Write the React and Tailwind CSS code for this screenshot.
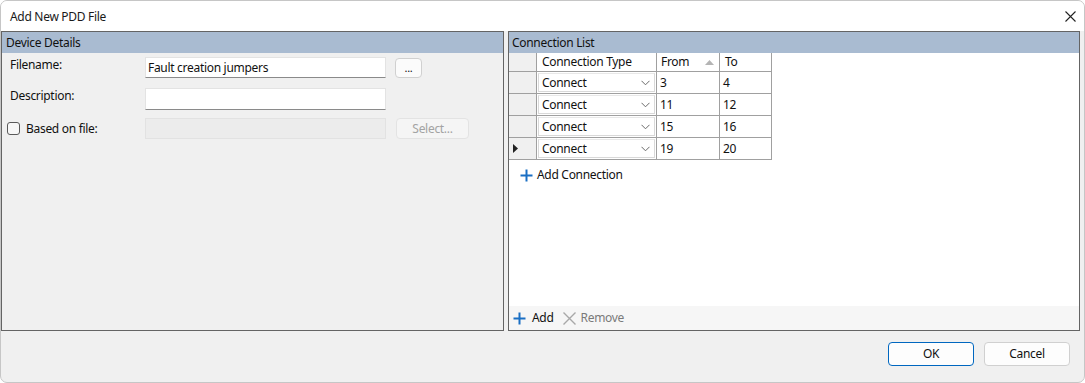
import React from "react";

const rows = [
  { from: "3", to: "4" },
  { from: "11", to: "12" },
  { from: "15", to: "16" },
  { from: "19", to: "20", current: true },
];

function Plus({ className }) {
  return (
    <svg width="13" height="13" viewBox="0 0 13 13" className={className}>
      <path d="M6.5 0.5v12M0.5 6.5h12" stroke="#1a6fc4" strokeWidth="2" fill="none" />
    </svg>
  );
}

function Chevron() {
  return (
    <svg width="9" height="6" viewBox="0 0 9 6">
      <path d="M0.5 0.8l4 4 4-4" stroke="#6a6a6a" strokeWidth="1" fill="none" />
    </svg>
  );
}

export default function App() {
  return (
    <div className="w-[1085px] h-[383px] bg-white font-['Noto_Sans',sans-serif] text-[12px] leading-[16px] tracking-[-0.3px] text-[#111]">
      <div className="w-[1085px] h-[383px] rounded-[7px] border border-[#c6c6c6] bg-[#f0f0f0] overflow-hidden flex flex-col">
        {/* Title bar */}
        <div className="h-[30px] bg-white flex items-center justify-between pl-[9px] pr-[9px] shrink-0">
          <span className="text-[#1a1a1a] pt-[1px]">Add New PDD File</span>
          <svg width="11" height="11" viewBox="0 0 11 11" className="-mr-[1px]">
            <path d="M0.5 0.5l10 10M10.5 0.5l-10 10" stroke="#222" strokeWidth="1.1" fill="none" />
          </svg>
        </div>

        {/* Panels */}
        <div className="flex gap-[4px] h-[300px] shrink-0">
          {/* Device Details */}
          <div className="w-[503px] h-[300px] border border-[#646464] flex flex-col">
            <div className="h-[21px] bg-[#a9bbd1] pl-[4px] flex items-center text-[#111]">Device Details</div>
            <div className="flex flex-col pl-[8px] pt-[4px]">
              <div className="flex items-start h-[21px]">
                <div className="w-[135px]">Filename:</div>
                <div className="w-[241px] h-[21px] bg-white border border-[#e3e3e3] border-b-[#8a8a8a] pl-[2px] flex items-center">
                  Fault creation jumpers
                </div>
                <button className="ml-[9px] mt-[1px] w-[27px] h-[20px] rounded-[4px] border border-[#d0d0d0] bg-[#fbfbfb] flex items-center justify-center text-[11px] leading-none pb-[2px]">
                  ...
                </button>
              </div>
              <div className="flex items-start h-[22px] mt-[10px]">
                <div className="w-[135px]">Description:</div>
                <div className="w-[241px] h-[22px] bg-white border border-[#e3e3e3] border-b-[#8a8a8a]"></div>
              </div>
              <div className="flex items-center h-[21px] mt-[8px] -ml-[3px]">
                <div className="w-[13px] h-[13px] rounded-[3px] border border-[#5a5a5a] bg-[#f7f7f7]"></div>
                <div className="w-[125px] pl-[6px]">Based on file:</div>
                <div className="w-[241px] h-[21px] bg-[#ececec] border border-[#e2e2e2]"></div>
                <button className="ml-[10px] w-[73px] h-[21px] rounded-[4px] border border-[#e3e3e3] bg-[#f5f5f5] text-[#a3a3a3] flex items-center justify-center">
                  Select...
                </button>
              </div>
            </div>
          </div>

          {/* Connection List */}
          <div className="w-[572px] h-[300px] border border-[#646464] flex flex-col">
            <div className="h-[21px] bg-[#a9bbd1] pl-[3px] flex items-center text-[#111] shrink-0">Connection List</div>
            <div className="flex-1 bg-white flex flex-col">
              {/* Grid */}
              <div className="flex flex-col self-start">
                <div className="flex h-[19px] border-b border-[#a0a0a0]">
                  <div className="w-[28px] border-r border-[#a0a0a0] bg-[#f0f0f0]"></div>
                  <div className="w-[120px] border-r border-[#a0a0a0] pl-[5px] flex items-center">Connection Type</div>
                  <div className="w-[63px] border-r border-[#a0a0a0] pl-[4px] flex items-center justify-between pr-[5px]">
                    <span>From</span>
                    <svg width="9" height="5" viewBox="0 0 9 5">
                      <path d="M0 5L4.5 0L9 5Z" fill="#b4b4b4" />
                    </svg>
                  </div>
                  <div className="w-[52px] border-r border-[#a0a0a0] pl-[5px] flex items-center">To</div>
                </div>
                {rows.map((r, i) => (
                  <div key={i} className="flex h-[22px] border-b border-[#a0a0a0]">
                    <div className="w-[28px] border-r border-[#a0a0a0] bg-[#f0f0f0] flex items-center pl-[4px]">
                      {r.current && (
                        <svg width="5" height="9" viewBox="0 0 5 9">
                          <path d="M0 0L5 4.5L0 9Z" fill="#222" />
                        </svg>
                      )}
                    </div>
                    <div className="w-[120px] border-r border-[#a0a0a0] p-[1px]">
                      <div className="h-full border border-[#d9d9d9] border-t-[#e8e8e8] bg-white flex items-center justify-between pl-[3px] pr-[4px]">
                        <span>Connect</span>
                        <Chevron />
                      </div>
                    </div>
                    <div className="w-[63px] border-r border-[#a0a0a0] pl-[3px] flex items-center">{r.from}</div>
                    <div className="w-[52px] border-r border-[#a0a0a0] pl-[3px] flex items-center">{r.to}</div>
                  </div>
                ))}
              </div>
              <div className="flex items-center h-[16px] mt-[7px] pl-[11px] gap-[4px]">
                <Plus />
                <span>Add Connection</span>
              </div>
              <div className="flex-1"></div>
              <div className="h-[24px] bg-[#f6f6f6] flex items-center pl-[4px]">
                <Plus />
                <span className="ml-[6px]">Add</span>
                <svg width="13" height="13" viewBox="0 0 13 13" className="ml-[9px]">
                  <path d="M0.5 0.5l12 12M12.5 0.5l-12 12" stroke="#a8a8a8" strokeWidth="1.4" fill="none" />
                </svg>
                <span className="ml-[5px] text-[#7a7a7a]">Remove</span>
              </div>
            </div>
          </div>
        </div>

        {/* Buttons */}
        <div className="flex justify-end gap-[10px] pt-[11px] pr-[14px]">
          <button className="w-[86px] h-[24px] rounded-[4px] border border-[#0067c0] bg-[#fdfdfd] flex items-center justify-center text-[#111]">
            OK
          </button>
          <button className="w-[86px] h-[24px] rounded-[4px] border border-[#d0d0d0] bg-[#fdfdfd] flex items-center justify-center text-[#111]">
            Cancel
          </button>
        </div>
      </div>
    </div>
  );
}
